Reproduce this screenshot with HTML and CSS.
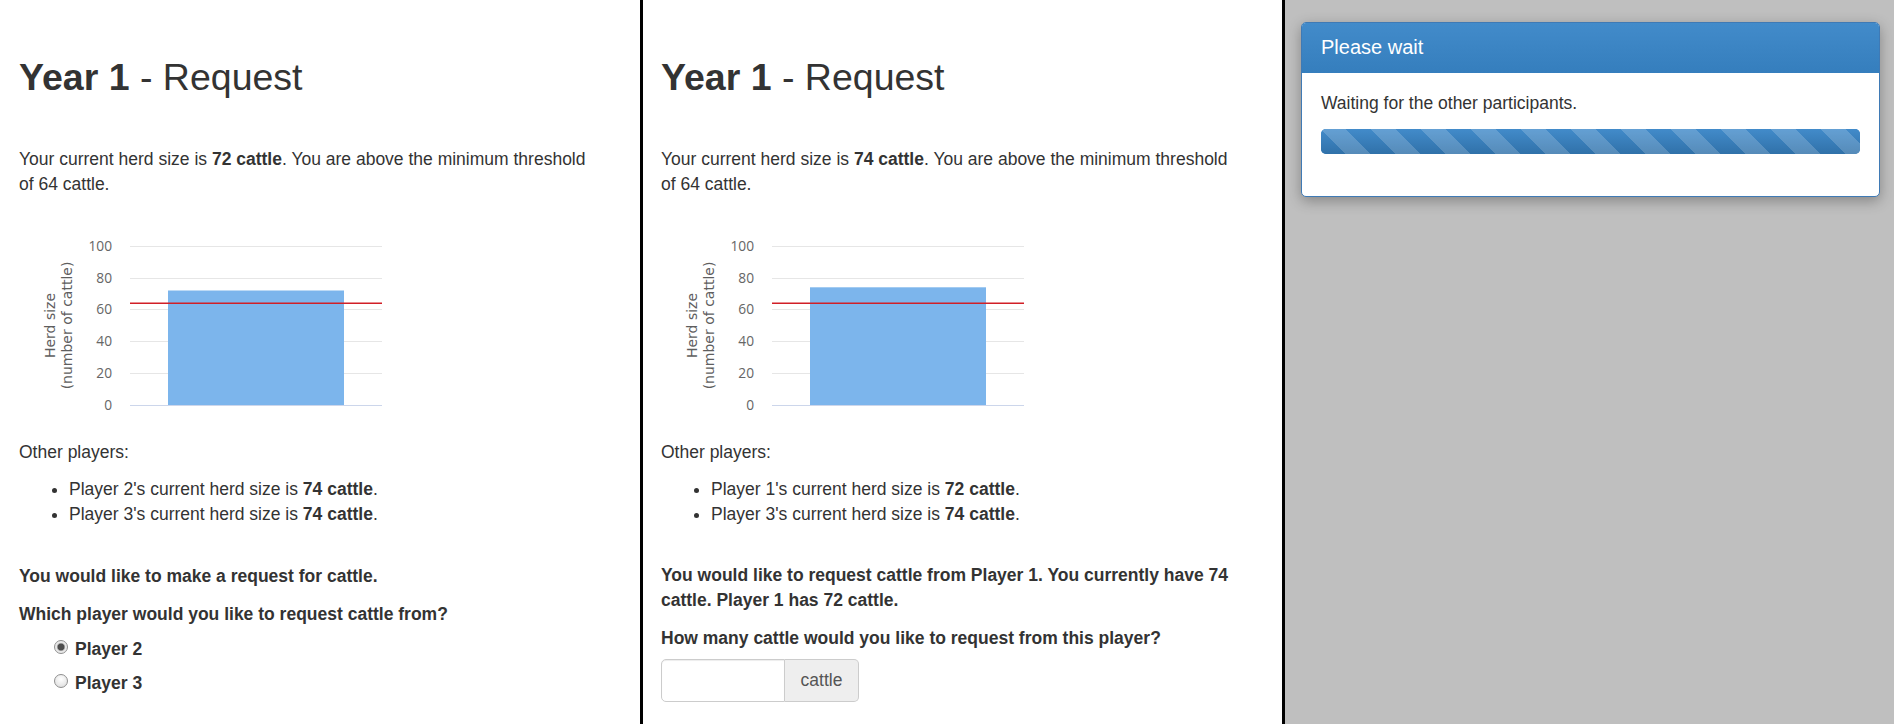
FILE: index.html
```html
<!DOCTYPE html>
<html lang="en">
<head>
<meta charset="utf-8">
<title>Year 1 - Request</title>
<link rel="stylesheet" href="styles.css">
</head>
<body>
<div class="screen">
  <section class="pane pane-left">
    <h2 class="title"><strong>Year 1</strong> - Request</h2>
    <p class="intro">Your current herd size is <strong>72 cattle</strong>. You are above the minimum threshold of 64 cattle.</p>
    <svg class="chart" width="400" height="220" viewBox="0 0 400 220" xmlns="http://www.w3.org/2000/svg">
      <g class="grid">
        <line x1="111" y1="36.5" x2="363" y2="36.5"/>
        <line x1="111" y1="68.5" x2="363" y2="68.5"/>
        <line x1="111" y1="99.5" x2="363" y2="99.5"/>
        <line x1="111" y1="131.5" x2="363" y2="131.5"/>
        <line x1="111" y1="163.5" x2="363" y2="163.5"/>
      </g>
      <rect class="bar-col" x="149" y="80.5" width="176" height="114.5"/>
      <line class="axis" x1="111" y1="195.5" x2="363" y2="195.5"/>
      <line class="threshold" x1="111" y1="93.2" x2="363" y2="93.2"/>
      <g class="ticks">
        <text x="93" y="41">100</text>
        <text x="93" y="73">80</text>
        <text x="93" y="104">60</text>
        <text x="93" y="136">40</text>
        <text x="93" y="168">20</text>
        <text x="93" y="200">0</text>
      </g>
      <g class="axis-title">
        <text transform="translate(36 115.5) rotate(-90)">Herd size</text>
        <text transform="translate(53 115.5) rotate(-90)">(number of cattle)</text>
      </g>
    </svg>
    <p class="others">Other players:</p>
    <ul class="players">
      <li>Player 2's current herd size is <strong>74 cattle</strong>.</li>
      <li>Player 3's current herd size is <strong>74 cattle</strong>.</li>
    </ul>
    <p class="decision">You would like to make a request for cattle.</p>
    <p class="question">Which player would you like to request cattle from?</p>
    <div class="radios">
      <label class="radio"><input type="radio" name="target" checked> Player 2</label>
      <label class="radio"><input type="radio" name="target"> Player 3</label>
    </div>
  </section>

  <section class="pane pane-mid">
    <h2 class="title"><strong>Year 1</strong> - Request</h2>
    <p class="intro">Your current herd size is <strong>74 cattle</strong>. You are above the minimum threshold of 64 cattle.</p>
    <svg class="chart" width="400" height="220" viewBox="0 0 400 220" xmlns="http://www.w3.org/2000/svg">
      <g class="grid">
        <line x1="111" y1="36.5" x2="363" y2="36.5"/>
        <line x1="111" y1="68.5" x2="363" y2="68.5"/>
        <line x1="111" y1="99.5" x2="363" y2="99.5"/>
        <line x1="111" y1="131.5" x2="363" y2="131.5"/>
        <line x1="111" y1="163.5" x2="363" y2="163.5"/>
      </g>
      <rect class="bar-col" x="149" y="77.3" width="176" height="117.7"/>
      <line class="axis" x1="111" y1="195.5" x2="363" y2="195.5"/>
      <line class="threshold" x1="111" y1="93.2" x2="363" y2="93.2"/>
      <g class="ticks">
        <text x="93" y="41">100</text>
        <text x="93" y="73">80</text>
        <text x="93" y="104">60</text>
        <text x="93" y="136">40</text>
        <text x="93" y="168">20</text>
        <text x="93" y="200">0</text>
      </g>
      <g class="axis-title">
        <text transform="translate(36 115.5) rotate(-90)">Herd size</text>
        <text transform="translate(53 115.5) rotate(-90)">(number of cattle)</text>
      </g>
    </svg>
    <p class="others">Other players:</p>
    <ul class="players">
      <li>Player 1's current herd size is <strong>72 cattle</strong>.</li>
      <li>Player 3's current herd size is <strong>74 cattle</strong>.</li>
    </ul>
    <p class="decision decision-wide">You would like to request cattle from Player 1. You currently have 74 cattle. Player 1 has 72 cattle.</p>
    <p class="question">How many cattle would you like to request from this player?</p>
    <div class="input-group">
      <input class="amount" type="text">
      <span class="addon">cattle</span>
    </div>
  </section>

  <section class="pane pane-wait">
    <div class="dialog">
      <div class="dialog-head">Please wait</div>
      <div class="dialog-body">
        <p>Waiting for the other participants.</p>
        <div class="progress"><div class="progress-bar"></div></div>
      </div>
    </div>
  </section>
</div>
</body>
</html>
```

FILE: styles.css
```css
* { box-sizing: border-box; }

html, body {
  margin: 0;
  height: 100%;
}

body {
  font-family: "Liberation Sans", Arial, sans-serif;
  font-size: 17.5px;
  line-height: 25px;
  color: #333;
  background: #fff;
  overflow: hidden;
}

.screen {
  display: flex;
  height: 724px;
  overflow: hidden;
}

.pane {
  flex: none;
  height: 724px;
  overflow: hidden;
  border-right: 3px solid #000;
  padding: 0 39px 0 19px;
}

.pane-left { width: 643px; }

.pane-mid {
  width: 642px;
  padding-left: 18px;
}

.pane-wait {
  flex: 1 1 auto;
  border-right: 0;
  background: #bfbfbf;
  padding: 22px 14px 0 16px;
}

.title {
  margin: 57px 0 0;
  font-size: 37.5px;
  line-height: 41.25px;
  font-weight: 400;
}

.title strong { font-weight: 700; }

.intro { margin: 48.75px 0 0; }

.chart {
  display: block;
  margin-top: 13px;
  width: 400px;
  height: 220px;
}

.grid line {
  stroke: #e6e6e6;
  stroke-width: 1;
}

.axis {
  stroke: #ccd6eb;
  stroke-width: 1;
}

.bar-col { fill: #7cb5ec; }

.threshold {
  stroke: #d11f26;
  stroke-width: 1.5;
}

.ticks text {
  font-family: "Open Sans", "DejaVu Sans", sans-serif;
  font-size: 13.75px;
  fill: #666;
  text-anchor: end;
}

.axis-title text {
  font-family: "DejaVu Sans", "Open Sans", sans-serif;
  font-size: 14px;
  fill: #5e5e5e;
  text-anchor: middle;
}

.others { margin: 9.5px 0 0; }

.players {
  margin: 12.5px 0 0;
  padding-left: 50px;
}

.decision {
  margin: 37px 0 0;
  font-weight: 700;
}

.decision-wide { margin-top: 36px; }

.question {
  margin: 13px 0 0;
  font-weight: 700;
}

.radios {
  margin-top: 9.5px;
  display: flex;
  flex-direction: column;
  gap: 9px;
}

.radio {
  display: flex;
  align-items: center;
  gap: 7px;
  height: 25px;
  padding-left: 35px;
  font-weight: 700;
}

.radio input {
  appearance: none;
  -webkit-appearance: none;
  width: 14px;
  height: 14px;
  margin: 0 0 4px;
  border: 1px solid #8f8f8f;
  border-radius: 50%;
  background: radial-gradient(circle at 50% 35%, #ffffff 0%, #e9e9e9 60%, #d4d4d4 100%);
  flex: none;
}

.radio input:checked {
  background: radial-gradient(circle, #4d4d4d 0, #4d4d4d 3px, #9a9a9a 3.6px, #e6e6e6 4.5px, #f4f4f4 100%);
}

.input-group {
  display: flex;
  margin-top: 8px;
  height: 42.5px;
  width: 198px;
}

.amount {
  width: 124px;
  height: 100%;
  margin: 0;
  padding: 0 15px;
  border: 1px solid #ccc;
  border-radius: 5px 0 0 5px;
  box-shadow: inset 0 1px 1px rgba(0, 0, 0, .075);
  font: inherit;
  color: #555;
  background: #fff;
}

.addon {
  width: 74px;
  display: flex;
  align-items: center;
  justify-content: center;
  border: 1px solid #ccc;
  border-left: 0;
  border-radius: 0 5px 5px 0;
  background: #eee;
  color: #555;
}

.dialog {
  background: #fff;
  border: 1px solid #3f7ab5;
  border-radius: 5px;
  box-shadow: 0 4px 14px rgba(0, 0, 0, .3);
  overflow: hidden;
}

.dialog-head {
  height: 50px;
  display: flex;
  align-items: center;
  padding: 0 19px 2px;
  background: linear-gradient(#428bca, #357ebd);
  color: #fff;
  font-size: 20px;
}

.dialog-body {
  padding: 18px 19px 17px;
}

.dialog-body p { margin: 0 0 12.5px; }

.progress {
  height: 25px;
  margin-bottom: 25px;
  border-radius: 5px;
  background: #f5f5f5;
  overflow: hidden;
}

.progress-bar {
  height: 100%;
  background-color: #428bca;
  background-image:
    linear-gradient(45deg, rgba(255,255,255,.18) 25%, transparent 25%, transparent 50%, rgba(255,255,255,.18) 50%, rgba(255,255,255,.18) 75%, transparent 75%, transparent),
    linear-gradient(#428bca, #3071a9);
  background-size: 50px 50px, 100% 100%;
}
```
